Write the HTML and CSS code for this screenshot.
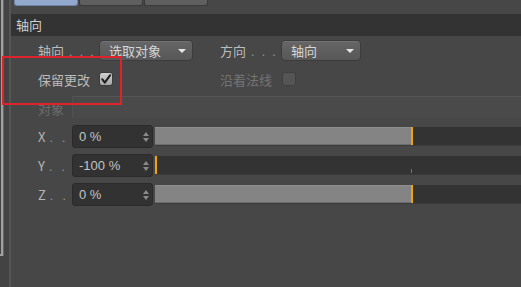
FILE: index.html
```html
<!DOCTYPE html>
<html>
<head>
<meta charset="utf-8">
<link rel="stylesheet" href="styles.css">
</head>
<body>
<div class="app">
  <div class="side"><div class="side-frame"></div></div>
  <div class="main">
    <div class="tabs">
      <div class="tab active"></div>
      <div class="tab"></div>
      <div class="tab"></div>
    </div>
    <div class="header">轴向</div>
    <div class="row row1">
      <div class="label">轴向<span class="dots">. . .</span></div>
      <div class="dropdown dd1"><span>选取对象</span><i class="arrow"></i></div>
      <div class="label label2">方向<span class="dots">. . .</span></div>
      <div class="dropdown dd2"><span>轴向</span><i class="arrow"></i></div>
    </div>
    <div class="row row2">
      <div class="label">保留更改</div>
      <div class="cell">
        <div class="check on">
          <svg width="14" height="14" viewBox="0 0 14 14"><path d="M3.2 7.2 L5.8 10.6 L11.2 3.2" fill="none" stroke="#1e1e1e" stroke-width="2" stroke-linecap="round" stroke-linejoin="round"/></svg>
        </div>
      </div>
      <div class="label label2 dim">沿着法线</div>
      <div class="check off"></div>
    </div>
    <div class="row group">
      <div class="label dim2">对象</div>
      <div class="group-line"></div>
    </div>
    <div class="slider-row sx">
      <div class="label">X<span class="dots2">. .</span></div>
      <div class="field"><span>0 %</span><i class="spin"></i></div>
      <div class="bar"><div class="fill" style="width:257px"></div><div class="mark"></div></div>
    </div>
    <div class="slider-row sy">
      <div class="label">Y<span class="dots2">. .</span></div>
      <div class="field"><span>-100 %</span><i class="spin"></i></div>
      <div class="bar"><div class="mark"></div><div class="tick"></div></div>
    </div>
    <div class="slider-row sz">
      <div class="label">Z<span class="dots2">. .</span></div>
      <div class="field"><span>0 %</span><i class="spin"></i></div>
      <div class="bar"><div class="fill" style="width:257px"></div><div class="mark"></div></div>
    </div>
  </div>
  <div class="annot"></div>
</div>
</body>
</html>
```
FILE: styles.css
```css
* { box-sizing: border-box; }
html, body { margin: 0; padding: 0; }
body {
  width: 521px; height: 287px; overflow: hidden;
  background: #474747;
  font-family: "Noto Sans CJK SC", "Noto Sans", sans-serif;
  font-size: 13px;
  color: #bdbdbd;
}
.app { position: relative; display: flex; width: 521px; height: 287px; }
.side {
  width: 11px; flex: none; height: 287px;
  background: #434343;
  border-right: 2px solid #555;
}
.side-frame {
  width: 4px; height: 256px;
  border-right: 2px solid #a0a0a0;
  border-bottom: 2px solid #a0a0a0;
  box-shadow: 1px 0 0 #666;
  margin-left: -1px;
}
.main { flex: 1; display: flex; flex-direction: column; }
.tabs { display: flex; gap: 1px; height: 6px; padding-left: 3px; }
.tab {
  width: 64px; height: 6px;
  background: #5f5f5f;
  border: 1px solid #3a3a3a; border-top: none;
  border-radius: 0 0 3px 3px;
}
.tab.active { background: #92a8cc; border-color: #6e82a4; }
.header {
  margin-top: 8px; height: 22px; line-height: 22px;
  background: #333333;
  padding-left: 5px;
  color: #cfcfcf;
}
.row { display: flex; align-items: center; padding-left: 27px; }
.label { width: 61px; flex: none; white-space: nowrap; color: #bcbcbc; }
.dots {
  font-family: "Liberation Sans", sans-serif; font-size: 12px;
  letter-spacing: 2px; margin-left: 5px; color: #9a9a9a;
}
.dots2 {
  font-family: "Liberation Sans", sans-serif; font-size: 12px;
  letter-spacing: 3px; margin-left: 4px; color: #9a9a9a;
}
.label2 { margin-left: 27px; }
.dim { color: #747474; }
.dim2 { color: #6c6c6c; width: 34px; }
.row1 { margin-top: 4px; height: 21px; }
.dropdown {
  height: 21px; display: flex; align-items: center; justify-content: space-between;
  padding: 0 6px 0 9px;
  background: linear-gradient(#666666, #575757);
  border: 1px solid #3c3c3c; border-radius: 4px;
  color: #d6d6d6;
  box-shadow: inset 0 1px 0 #727272;
}
.dd1 { width: 94px; }
.dd2 { width: 80px; }
.arrow {
  width: 0; height: 0;
  border-left: 4px solid transparent; border-right: 4px solid transparent;
  border-top: 4px solid #e6e6e6;
}
.row2 { margin-top: 9px; height: 18px; }
.cell { width: 94px; flex: none; display: flex; align-items: center; }
.check {
  width: 14px; height: 14px; border-radius: 3px; flex: none;
}
.check.on { background: linear-gradient(#d0d0d0, #a9a9a9); border: 1px solid #3c3c3c; }
.check.on svg { display: block; margin: -1px 0 0 -1px; }
.check.off { background: #555555; border: 1px solid #3f3f3f; margin-left: 1px; }
.group { margin-top: 8px; height: 22px; align-items: stretch; }
.group .label { line-height: 22px; margin-top: 2px; }
.group-line {
  flex: 1;
  border-top: 1px solid #555;
  border-left: 1px solid #515151;
  background: #4a4a4a;
}
.slider-row {
  display: flex; align-items: center; padding-left: 27px;
  height: 23px; margin-top: 6px;
}
.group + .slider-row { margin-top: 7px; }
.slider-row .label { width: 34px; color: #b5b5b5; }
.field {
  width: 81px; height: 23px; flex: none;
  background: #323232;
  border: 1px solid #2a2a2a; border-radius: 3px;
  display: flex; align-items: center; justify-content: space-between;
  padding: 0 3px 0 6px;
  color: #c4c4c4;
  font-family: "Liberation Sans", "Noto Sans", sans-serif;
  font-size: 13px;
}
.spin { position: relative; width: 6px; height: 10px; }
.spin::before, .spin::after {
  content: ""; position: absolute; left: 0;
  border-left: 3px solid transparent; border-right: 3px solid transparent;
}
.spin::before { top: 0; border-bottom: 4px solid #8a8a8a; }
.spin::after { bottom: 0; border-top: 4px solid #8a8a8a; }
.bar {
  position: relative; flex: 1; height: 19px; margin-left: 2px;
  background: #333333;
  border-bottom: 1px solid #3c3c3c;
}
.fill {
  height: 100%;
  background: #848484;
  border-top: 1px solid #8e8e8e;
  border-bottom: 1px solid #6c6c6c;
}
.mark {
  position: absolute; top: 0; bottom: 0; width: 2px;
  background: #f0a30a;
}
.sx .mark, .sz .mark { left: 256px; }
.sy .mark { left: 0; }
.tick {
  position: absolute; left: 256px; bottom: 1px; width: 1px; height: 4px;
  background: #a56f10;
}
.annot {
  position: absolute; left: 2px; top: 56px; width: 120px; height: 49px;
  border: 2px solid #e0232a;
  pointer-events: none;
}
```
